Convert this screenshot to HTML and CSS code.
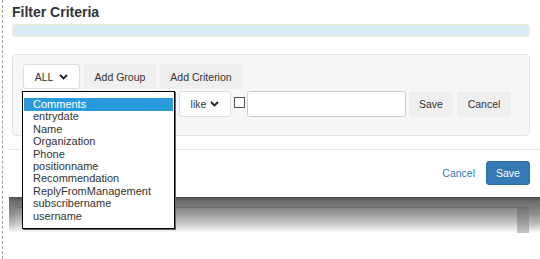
FILE: index.html
```html
<!DOCTYPE html>
<html lang="en">
<head>
  <meta charset="UTF-8" />
  <title>Filter Criteria</title>
  <link rel="stylesheet" href="styles.css">
</head>
<body>
  <div class="page">
    <div class="modal">
      <h4 class="title">Filter Criteria</h4>
      <div class="info-bar"></div>

      <div class="criteria-panel">
        <div class="row">
          <div class="select select-all">ALL
            <svg class="chev" width="9" height="6" viewBox="0 0 9 6"><polyline points="1,1 4.5,4.5 8,1" /></svg>
          </div>
          <button class="btn">Add Group</button>
          <button class="btn btn-wide">Add Criterion</button>
        </div>

        <div class="row row-criterion">
          <div class="field-wrap">
            <div class="select select-field"></div>
            <ul class="field-list">
              <li class="selected">Comments</li>
              <li>entrydate</li>
              <li>Name</li>
              <li>Organization</li>
              <li>Phone</li>
              <li>positionname</li>
              <li>Recommendation</li>
              <li>ReplyFromManagement</li>
              <li>subscribername</li>
              <li>username</li>
            </ul>
          </div>
          <div class="select select-op">like
            <svg class="chev" width="9" height="6" viewBox="0 0 9 6"><polyline points="1,1 4.5,4.5 8,1" /></svg>
          </div>
          <span class="checkbox"></span>
          <input type="text" class="value-input" />
          <button class="btn btn-save">Save</button>
          <button class="btn btn-cancel">Cancel</button>
        </div>
      </div>

      <div class="modal-footer">
        <a class="link" href="#">Cancel</a>
        <button class="btn-primary">Save</button>
      </div>
    </div>

    <div class="backdrop">
      <div class="backdrop-box"></div>
    </div>
  </div>
</body>
</html>
```

FILE: styles.css
```css
body {
  margin: 0;
  font-family: "Liberation Sans", Arial, sans-serif;
  color: #333;
  background: #fff;
}

.page {
  margin-left: 2px;
  border-left: 1px dashed #a0a0a0;
  height: 259px;
  box-sizing: border-box;
}

.modal {
  margin-left: 6px;
  padding: 4px 10px 0 3px;
  background: #fff;
  height: 197px;
  box-sizing: border-box;
}

.title {
  margin: 0;
  font-size: 14px;
  line-height: 16px;
  font-weight: bold;
  color: #333;
}

.info-bar {
  margin-top: 4px;
  height: 13px;
  box-sizing: border-box;
  background: #d9edf7;
  border: 1px solid #f7ead0;
  border-radius: 3px;
}

.criteria-panel {
  margin-top: 17px;
  height: 82px;
  box-sizing: border-box;
  padding: 9px 10px 0 10px;
  background: #f7f7f7;
  border: 1px solid #e3e3e3;
  border-radius: 4px;
}

.row {
  display: flex;
  align-items: center;
  gap: 4px;
  height: 25px;
}

.row-criterion {
  margin-top: 2px;
  height: 26px;
  gap: 3px;
}

.select {
  display: flex;
  align-items: center;
  justify-content: center;
  gap: 6px;
  box-sizing: border-box;
  background: #fff;
  border: 1px solid #ddd;
  border-radius: 3px;
  font-size: 10.5px;
  color: #333;
}

.select-all {
  width: 57px;
  height: 25px;
}

.select-field {
  width: 152px;
  height: 26px;
}

.select-op {
  width: 52px;
  height: 26px;
  gap: 4px;
}

.chev polyline {
  fill: none;
  stroke: #222;
  stroke-width: 1.8;
}

.btn {
  height: 25px;
  padding: 0;
  border: none;
  border-radius: 3px;
  background: #efefef;
  font-family: inherit;
  font-size: 10.5px;
  color: #333;
  width: 72px;
}

.btn-wide {
  width: 82px;
}

.btn-save {
  width: 44px;
}

.btn-cancel {
  width: 54px;
  margin-left: 1px;
}

.field-wrap {
  position: relative;
  margin-left: 1px;
}

.field-list {
  position: absolute;
  top: 0;
  left: -2px;
  width: 153px;
  margin: 0;
  padding: 6px 1px 6px 1px;
  list-style: none;
  background: #fff;
  border: 1px solid #000;
  box-shadow: 1px 1px 0 #666;
  box-sizing: border-box;
  z-index: 2;
}

.field-list li {
  font-size: 11px;
  line-height: 12.4px;
  padding-left: 9px;
  color: #333;
  white-space: nowrap;
}

.field-list li.selected {
  background: #2a9bda;
  color: #fff;
  line-height: 13px;
  margin-bottom: -0.6px;
}

.checkbox {
  width: 11px;
  height: 11px;
  box-sizing: border-box;
  border: 1px solid #555;
  background: #fff;
  margin-bottom: 4px;
}

.value-input {
  width: 159px;
  height: 26px;
  box-sizing: border-box;
  margin: 0 0 0 -1px;
  border: 1px solid #ccc;
  border-radius: 3px;
  background: #fff;
}

.modal-footer {
  margin: 13px -10px 0 -3px;
  padding: 11px 10px 0 0;
  border-top: 1px solid #e5e5e5;
  display: flex;
  justify-content: flex-end;
  align-items: center;
  gap: 11px;
}

.link {
  color: #337ab7;
  text-decoration: none;
  font-size: 10.5px;
}

.btn-primary {
  width: 44px;
  height: 24px;
  padding: 0;
  border: 1px solid #2e6da4;
  border-radius: 3px;
  background: #337ab7;
  color: #fff;
  font-family: inherit;
  font-size: 10.5px;
}

.backdrop {
  margin-left: 6px;
  height: 36px;
  padding: 10px 11px 0 6px;
  box-sizing: border-box;
  background: linear-gradient(#4c4c4c 0, #6e6e6e 12%, #8c8c8c 45%, #bdbdbd 75%, #fff 100%);
}

.backdrop-box {
  height: 100%;
  box-sizing: border-box;
  border-top: 1px solid #6a6a6a;
  border-right: 12px solid rgba(70, 70, 70, 0.3);
  border-top-left-radius: 4px;
  background: linear-gradient(rgba(255, 255, 255, 0.08), rgba(255, 255, 255, 0.25));
}
```
